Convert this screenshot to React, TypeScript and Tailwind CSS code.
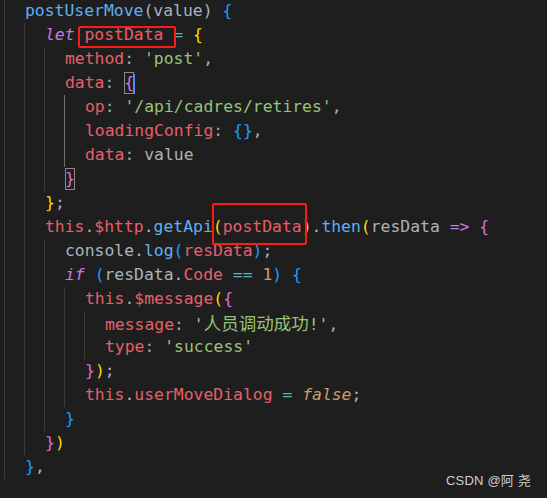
const fn = "text-[#61afef]";
const kw = "text-[#c678dd] italic";
const vr = "text-[#e5606b]";
const pn = "text-[#abb2bf]";
const cl = "text-[#7fb5bd]";
const st = "text-[#98c379]";
const nm = "text-[#d19a66]";
const op = "text-[#56b6c2]";
const ar = "text-[#c678dd]";
const fl = "text-[#d19a66] italic";
const b1 = "text-[#ffd700]";
const b2 = "text-[#da70d6]";
const b3 = "text-[#179fff]";
const box = "inline-block leading-[22px] outline outline-[#8a8a8a] -outline-offset-1";

type Tok = [string, string];
type Line = { indent: number; toks: Tok[]; caret?: boolean };

const sp: Tok = [" ", pn];

const lines: Line[] = [
  { indent: 1, toks: [["postUserMove", fn], ["(", pn], ["value", pn], [")", pn], sp, ["{", b3]] },
  { indent: 2, toks: [["let", kw], sp, ["postData", vr], sp, ["=", op], sp, ["{", b1]] },
  { indent: 3, toks: [["method", vr], [":", cl], sp, ["'post'", st], [",", pn]] },
  { indent: 3, toks: [["data", vr], [":", cl], sp, ["{", b2 + " " + box]], caret: true },
  { indent: 4, toks: [["op", vr], [":", cl], sp, ["'/api/cadres/retires'", st], [",", pn]] },
  { indent: 4, toks: [["loadingConfig", vr], [":", cl], sp, ["{}", b3], [",", pn]] },
  { indent: 4, toks: [["data", vr], [":", cl], sp, ["value", pn]] },
  { indent: 3, toks: [["}", b2 + " " + box]] },
  { indent: 2, toks: [["}", b1], [";", pn]] },
  {
    indent: 2,
    toks: [
      ["this", vr], [".", pn], ["$http", vr], [".", pn], ["getApi", fn], ["(", b1], ["postData", vr], [")", b1],
      [".", pn], ["then", fn], ["(", b1], ["resData", pn], sp, ["=>", ar], sp, ["{", b2],
    ],
  },
  { indent: 3, toks: [["console", pn], [".", pn], ["log", fn], ["(", b3], ["resData", vr], [")", b3], [";", pn]] },
  {
    indent: 3,
    toks: [["if", kw], sp, ["(", b3], ["resData", pn], [".", pn], ["Code", vr], sp, ["==", op], sp, ["1", nm], [")", b3], sp, ["{", b3]],
  },
  { indent: 4, toks: [["this", vr], [".", pn], ["$message", vr], ["(", b1], ["{", b2]] },
  { indent: 5, toks: [["message", vr], [":", cl], sp, ["'", st], ["人员调动成功", st + " cjk"], ["!'", st], [",", pn]] },
  { indent: 5, toks: [["type", vr], [":", cl], sp, ["'success'", st]] },
  { indent: 4, toks: [["}", b2], [")", b1], [";", pn]] },
  { indent: 4, toks: [["this", vr], [".", pn], ["userMoveDialog", vr], sp, ["=", op], sp, ["false", fl], [";", pn]] },
  { indent: 3, toks: [["}", b3]] },
  { indent: 2, toks: [["}", b2], [")", b1]] },
  { indent: 1, toks: [["}", b3], [",", pn]] },
];

function CodeLine({ line, index }: { line: Line; index: number }) {
  const guides = Array.from({ length: line.indent });
  return (
    <div className="flex h-[24px] items-stretch leading-[24px] whitespace-pre">
      {guides.map((_, g) => {
        // guide of the block the caret sits in is brighter
        const active = g === 3 && index >= 4 && index <= 6;
        return (
          <span
            key={g}
            className={
              active
                ? "w-[20px] shrink-0 border-l border-[#6e6e6e]"
                : "w-[20px] shrink-0 border-l border-[#3c3c3c]"
            }
          />
        );
      })}
      <span className="pl-[1px]">
        {line.toks.map(([text, cls], i) =>
          cls.includes("cjk") ? (
            <span
              key={i}
              className={cls.replace(" cjk", "") + " text-[17.5px] [font-family:'Noto_Sans_CJK_SC',sans-serif]"}
            >
              {text}
            </span>
          ) : (
            <span key={i} className={cls}>
              {text}
            </span>
          )
        )}
        {line.caret && <span className="inline-block w-[2px] h-[20px] -ml-[1px] align-middle bg-[#528bff]" />}
      </span>
    </div>
  );
}

export default function App() {
  return (
    <div className="relative w-[547px] h-[498px] overflow-hidden bg-[#1e1e1e]">
      <div className="pl-[4px] -mt-[1px] text-[16.4px] [font-family:'DejaVu_Sans_Mono',monospace]">
        {lines.map((line, i) => (
          <CodeLine key={i} line={line} index={i} />
        ))}
      </div>

      {/* red annotation boxes */}
      <div className="absolute left-[78px] top-[26px] w-[98px] h-[22px] border-2 border-[#ff1a1a] rounded-[2px]" />
      <div className="absolute left-[212px] top-[203px] w-[95px] h-[42px] border-2 border-[#ff1a1a] rounded-[2px]" />

      {/* watermark */}
      <div className="absolute right-[16px] bottom-[8px] text-[13px] tracking-[0.2px] text-[#cfcfcf] [font-family:'Liberation_Sans','Noto_Sans_CJK_SC',sans-serif]">
        CSDN @阿 尧
      </div>
    </div>
  );
}
